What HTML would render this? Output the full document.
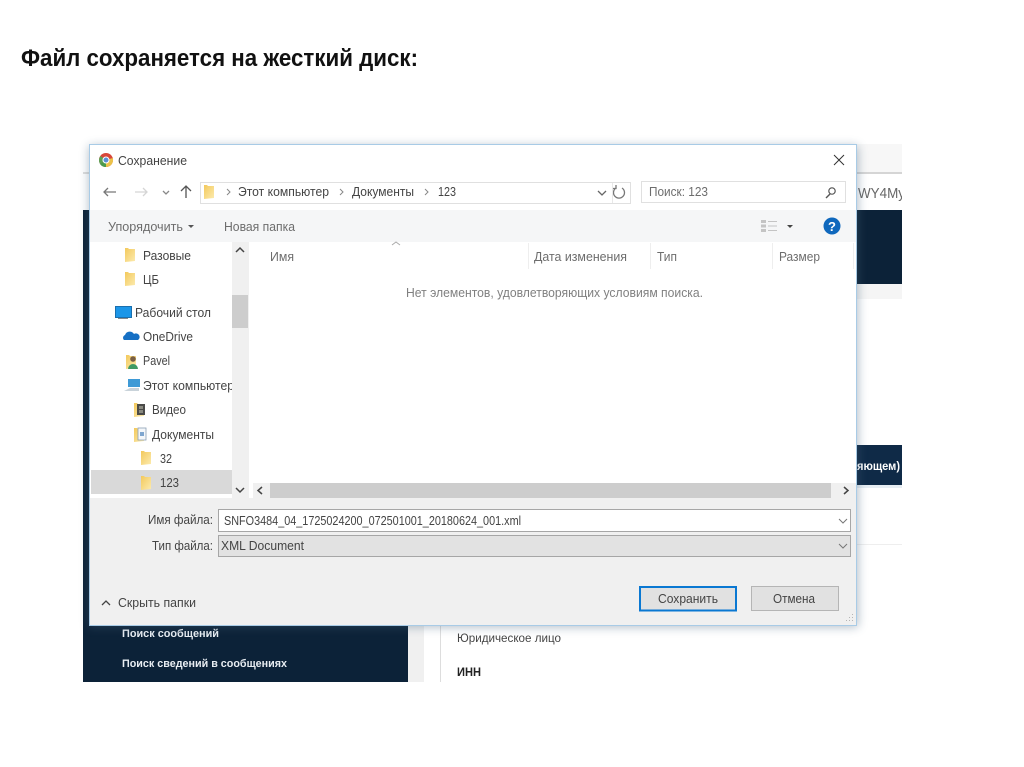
<!DOCTYPE html>
<html lang="ru"><head><meta charset="utf-8"><title>Файл сохраняется на жесткий диск</title>
<style>
html,body{margin:0;padding:0;background:#fff;width:1024px;height:767px;overflow:hidden}
svg{display:block;position:absolute;left:0;top:0;filter:blur(.35px)}
text{font-family:"Liberation Sans",sans-serif;font-size:13px;fill:#333}
.g{fill:#6d6d6d}
.d{fill:#444}
</style></head><body>
<svg width="1024" height="767" viewBox="0 0 1024 767" xmlns="http://www.w3.org/2000/svg">
<defs>
<filter id="s" x="-5%" y="-5%" width="110%" height="110%"><feGaussianBlur stdDeviation="5"/></filter>
<clipPath id="c1"><rect x="130" y="375" width="102" height="22"/></clipPath>
<clipPath id="c2"><rect x="857" y="180" width="45" height="25"/></clipPath>
<clipPath id="c3"><rect x="857" y="450" width="45" height="30"/></clipPath>
<linearGradient id="fg" x1="0" x2="1" y1="0" y2="1"><stop offset="0" stop-color="#f3c95c"/><stop offset="1" stop-color="#fcebaf"/></linearGradient>
<g id="f"><path d="M0 1h3l1 1h6v12l-10 1z" fill="url(#fg)"/></g>
</defs>

<text x="21" y="66" font-weight="bold" style="font-size:24px;fill:#111" textLength="397" lengthAdjust="spacingAndGlyphs">Файл сохраняется на жесткий диск:</text>

<!-- background page -->
<rect x="83" y="172" width="6" height="2" fill="#ddd"/>
<rect x="856" y="172" width="46" height="2" fill="#d5d5d5"/>
<rect x="856" y="144" width="46" height="28" fill="#f7f7f7"/>
<rect x="83" y="210" width="6" height="415" fill="#0c2238"/>
<rect x="856" y="210" width="46" height="74" fill="#0c2238"/>
<rect x="856" y="284" width="46" height="15" fill="#f5f5f5"/>
<rect x="856" y="445" width="46" height="40" fill="#0f2a47"/>
<rect x="856" y="485" width="46" height="3" fill="#e6edf3"/>
<rect x="856" y="544" width="46" height="1" fill="#eee"/>
<rect x="83" y="625" width="325" height="57" fill="#0c2238"/>
<rect x="408" y="625" width="16" height="57" fill="#f0f0f0"/>
<rect x="440" y="625" width="1" height="57" fill="#ddd"/>
<g clip-path="url(#c2)"><text x="858" y="198" style="font-size:15px;fill:#666" textLength="47" lengthAdjust="spacingAndGlyphs">WY4My</text></g>
<g clip-path="url(#c3)"><text x="857" y="470" font-weight="bold" style="font-size:12px;fill:#fff" textLength="43" lengthAdjust="spacingAndGlyphs">яющем)</text></g>
<text x="122" y="637" font-weight="bold" style="font-size:11px;fill:#e8edf2" textLength="97" lengthAdjust="spacingAndGlyphs">Поиск сообщений</text>
<text x="122" y="667" font-weight="bold" style="font-size:11px;fill:#e8edf2" textLength="165" lengthAdjust="spacingAndGlyphs">Поиск сведений в сообщениях</text>
<text x="457" y="642" style="font-size:11.5px" class="d" textLength="104" lengthAdjust="spacingAndGlyphs">Юридическое лицо</text>
<text x="457" y="676" font-weight="bold" style="font-size:11.5px;fill:#222" textLength="24" lengthAdjust="spacingAndGlyphs">ИНН</text>

<!-- dialog -->
<rect x="89" y="146" width="769" height="481" fill="#44617a" opacity=".42" filter="url(#s)"/>
<rect x="89.5" y="144.5" width="767" height="481" fill="#fff" stroke="#a8cbe6"/>
<rect x="90" y="210" width="766" height="32" fill="#f5f6f7"/>
<rect x="90" y="498" width="766" height="127" fill="#f0f0f0"/>

<!-- title bar -->
<circle cx="106" cy="160" r="7" fill="#d8473a"/>
<path d="M106 160 L100 164 A7 7 0 0 0 106 167 Z" fill="#4a9a4c"/>
<path d="M100 164 A7 7 0 0 1 100.500 156 L106 160Z" fill="#5aa257"/>
<path d="M106 160 L112.800 158 A7 7 0 0 1 106 167Z" fill="#ebc24a"/>
<circle cx="106" cy="160" r="3" fill="#5b8fd6" stroke="#fff"/>
<text x="118" y="165" class="d" textLength="69" lengthAdjust="spacingAndGlyphs">Сохранение</text>
<path d="M834 155l10 10M844 155l-10 10" stroke="#333" stroke-width="1" fill="none"/>

<!-- nav -->
<g fill="none" stroke-width="1.300">
<path d="M104 192h12M108 188l-4 4 4 4" stroke="#777"/>
<path d="M135 192h12M143 188l4 4-4 4" stroke="#d5d5d5"/>
<path d="M163 191l3 3 3-3" stroke="#888"/>
<path d="M186 198v-12M181 191l5-5 5 5" stroke="#555"/>
<path d="M598 191l4 4 4-4" stroke="#666"/>
<path d="M616 188a5.500 5.500 0 1 0 6 0M616 185v3.500h-3.500" stroke="#777"/>
<path d="M227 189l3 3-3 3M340 189l3 3-3 3M425 189l3 3-3 3" stroke="#888" stroke-width="1"/>
</g>
<rect x="200.500" y="182.500" width="430" height="21" fill="none" stroke="#e0e0e0"/>
<rect x="612" y="183" width="1" height="20" fill="#e8e8e8"/>
<use href="#f" x="204" y="184"/>
<text x="238" y="196" class="d" textLength="91" lengthAdjust="spacingAndGlyphs">Этот компьютер</text>
<text x="352" y="196" class="d" textLength="62" lengthAdjust="spacingAndGlyphs">Документы</text>
<text x="438" y="196" class="d" textLength="18" lengthAdjust="spacingAndGlyphs">123</text>
<rect x="641.500" y="181.500" width="204" height="21" fill="#fff" stroke="#e0e0e0"/>
<text x="649" y="196" class="g" textLength="59" lengthAdjust="spacingAndGlyphs">Поиск: 123</text>
<circle cx="832" cy="191" r="3.200" fill="none" stroke="#555" stroke-width="1.200"/>
<path d="M830 194l-4 4" stroke="#555" stroke-width="1.400"/>

<!-- toolbar -->
<text x="108" y="231" class="g" textLength="75" lengthAdjust="spacingAndGlyphs">Упорядочить</text>
<path d="M188 225h6l-3 3z" fill="#555"/>
<text x="224" y="231" class="g" textLength="71" lengthAdjust="spacingAndGlyphs">Новая папка</text>
<g fill="#c4c4c4">
<rect x="761" y="220" width="5" height="3"/><rect x="761" y="224.500" width="5" height="3"/><rect x="761" y="229" width="5" height="3"/>
<rect x="768" y="221" width="9" height="1"/><rect x="768" y="225.500" width="9" height="1"/><rect x="768" y="230" width="9" height="1"/>
</g>
<path d="M787 225h6l-3 3z" fill="#444"/>
<circle cx="832" cy="226" r="8.500" fill="#0f68bd"/>
<text x="832" y="231" text-anchor="middle" font-weight="bold" style="font-size:13px;fill:#fff">?</text>

<!-- columns -->
<path d="M392 245l4-3 4 3" stroke="#aaa" fill="none"/>
<text x="270" y="261" class="g" textLength="24" lengthAdjust="spacingAndGlyphs">Имя</text>
<rect x="528" y="243" width="1" height="26" fill="#eee"/>
<rect x="650" y="243" width="1" height="26" fill="#eee"/>
<rect x="772" y="243" width="1" height="26" fill="#eee"/>
<rect x="853" y="243" width="1" height="26" fill="#eee"/>
<text x="534" y="261" class="g" textLength="93" lengthAdjust="spacingAndGlyphs">Дата изменения</text>
<text x="657" y="261" class="g" textLength="20" lengthAdjust="spacingAndGlyphs">Тип</text>
<text x="779" y="261" class="g" textLength="41" lengthAdjust="spacingAndGlyphs">Размер</text>
<text x="406" y="297" class="g" style="font-size:12.500px;fill:#808080" textLength="297" lengthAdjust="spacingAndGlyphs">Нет элементов, удовлетворяющих условиям поиска.</text>

<!-- sidebar -->
<rect x="232" y="242" width="17" height="256" fill="#f0f0f0"/>
<rect x="232" y="295" width="16" height="33" fill="#cdcdcd"/>
<path d="M236 252l4-4 4 4M236 488l4 4 4-4" stroke="#444" stroke-width="1.500" fill="none"/>
<rect x="91" y="470" width="141" height="24" fill="#d9d9d9"/>

<use href="#f" x="125" y="247"/>
<text x="143" y="260" class="d" textLength="48" lengthAdjust="spacingAndGlyphs">Разовые</text>
<use href="#f" x="125" y="271"/>
<text x="143" y="284" class="d" textLength="16" lengthAdjust="spacingAndGlyphs">ЦБ</text>

<rect x="115.500" y="306.500" width="16" height="11" fill="#1c96e8" stroke="#1a6fae"/>
<rect x="118" y="318" width="10" height="1" fill="#888"/>
<text x="135" y="317" class="d" textLength="76" lengthAdjust="spacingAndGlyphs">Рабочий стол</text>

<path d="M124 340a3 3 0 0 1 1-5 5 5 0 0 1 9-1 3.500 3.500 0 0 1 4 6z" fill="#1670c4"/>
<text x="143" y="341" class="d" textLength="50" lengthAdjust="spacingAndGlyphs">OneDrive</text>

<use href="#f" x="126" y="354"/>
<circle cx="133" cy="359" r="2.800" fill="#7a5f45"/>
<path d="M128 369a5 5 0 0 1 10 0z" fill="#3f9a63"/>
<text x="143" y="365" class="d" textLength="27" lengthAdjust="spacingAndGlyphs">Pavel</text>

<rect x="128" y="379" width="12" height="8" fill="#3e9ad6"/>
<path d="M124 391l6-3h9v3z" fill="#c9d3da"/>
<g clip-path="url(#c1)"><text x="143" y="390" class="d" textLength="91" lengthAdjust="spacingAndGlyphs">Этот компьютер</text></g>

<use href="#f" x="134" y="402"/>
<rect x="137" y="404" width="8" height="11" fill="#4a4a48"/>
<rect x="139" y="406" width="4" height="3" fill="#8a8a80"/><rect x="139" y="410" width="4" height="3" fill="#8a8a80"/>
<text x="152" y="414" class="d" textLength="34" lengthAdjust="spacingAndGlyphs">Видео</text>

<use href="#f" x="134" y="427"/>
<rect x="138" y="428" width="8" height="12" fill="#f4f7fa" stroke="#8b9fb4" stroke-width=".8"/>
<rect x="140" y="432" width="4" height="4" fill="#7fa6cf"/>
<text x="152" y="439" class="d" textLength="62" lengthAdjust="spacingAndGlyphs">Документы</text>

<use href="#f" x="141" y="450"/>
<text x="160" y="463" class="d" textLength="12" lengthAdjust="spacingAndGlyphs">32</text>
<use href="#f" x="141" y="475"/>
<text x="160" y="487" class="d" textLength="19" lengthAdjust="spacingAndGlyphs">123</text>

<!-- h scrollbar -->
<rect x="253" y="483" width="603" height="15" fill="#f0f0f0"/>
<rect x="270" y="483" width="561" height="15" fill="#cdcdcd"/>
<path d="M262 487l-4 3.500 4 3.500M844 487l4 3.500-4 3.500" stroke="#444" stroke-width="1.500" fill="none"/>

<!-- bottom -->
<text x="148" y="524" class="d" textLength="65" lengthAdjust="spacingAndGlyphs">Имя файла:</text>
<text x="152" y="550" class="d" textLength="61" lengthAdjust="spacingAndGlyphs">Тип файла:</text>
<rect x="218.500" y="509.500" width="632" height="22" fill="#fff" stroke="#a6a6a6"/>
<rect x="218.500" y="535.500" width="632" height="21" fill="#e2e2e2" stroke="#a6a6a6"/>
<text x="224" y="525" class="d" textLength="297" lengthAdjust="spacingAndGlyphs">SNFO3484_04_1725024200_072501001_20180624_001.xml</text>
<text x="221" y="550" class="d" textLength="83" lengthAdjust="spacingAndGlyphs">XML Document</text>
<path d="M839 519l4 4 4-4M839 544l4 4 4-4" stroke="#777" fill="none"/>

<path d="M102 605l4-4 4 4" stroke="#444" stroke-width="1.300" fill="none"/>
<text x="118" y="607" class="d" textLength="78" lengthAdjust="spacingAndGlyphs">Скрыть папки</text>

<rect x="640" y="587" width="96" height="23.500" fill="#e1e1e1" stroke="#0a78d2" stroke-width="2"/>
<text x="658" y="603" class="d" textLength="60" lengthAdjust="spacingAndGlyphs">Сохранить</text>
<rect x="751.500" y="586.500" width="87" height="24" fill="#e1e1e1" stroke="#b5b5b5"/>
<text x="773" y="603" class="d" textLength="42" lengthAdjust="spacingAndGlyphs">Отмена</text>
<g fill="#b5b5b5"><rect x="852" y="614" width="1" height="1"/><rect x="849" y="617" width="1" height="1"/><rect x="852" y="617" width="1" height="1"/><rect x="846" y="620" width="1" height="1"/><rect x="849" y="620" width="1" height="1"/><rect x="852" y="620" width="1" height="1"/></g>
</svg>
</body></html>
